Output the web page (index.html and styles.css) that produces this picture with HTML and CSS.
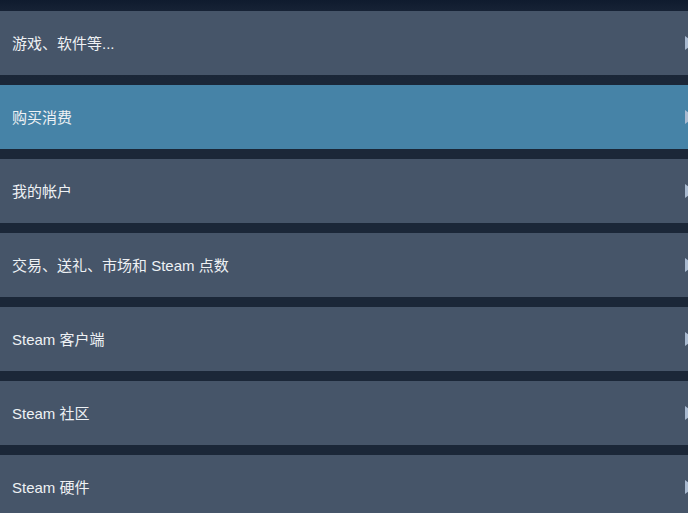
FILE: index.html
```html
<!doctype html>
<html>
    <head>
        <link rel="stylesheet" href="styles.css">
    </head>

    <body>
    <ul class="help-topics">
        <li>
            <span class="topic-label">游戏、软件等...</span>
            <span class="topic-arrow"></span>
        </li>
        <li class="active">
            <span class="topic-label">购买消费</span>
            <span class="topic-arrow"></span>
        </li>
        <li>
            <span class="topic-label">我的帐户</span>
            <span class="topic-arrow"></span>
        </li>
        <li>
            <span class="topic-label">交易、送礼、市场和 Steam 点数</span>
            <span class="topic-arrow"></span>
        </li>
        <li>
            <span class="topic-label">Steam 客户端</span>
            <span class="topic-arrow"></span>
        </li>
        <li>
            <span class="topic-label">Steam 社区</span>
            <span class="topic-arrow"></span>
        </li>
        <li>
            <span class="topic-label">Steam 硬件</span>
            <span class="topic-arrow"></span>
        </li>
    </ul>
    </body>
</html>
```

FILE: styles.css
```css
body {
    margin: 0;
    min-height: 100vh;
    overflow: hidden;
    font-family: "Liberation Sans", "Noto Sans CJK SC", sans-serif;
    background: linear-gradient(to bottom, #0f1b2e 0px, #172336 12px, #1b2738 80px, #1b2738 100%);
}

.help-topics {
    margin: 0;
    padding: 11px 0 0 0;
    list-style-type: none;
    display: flex;
    flex-direction: column;
    gap: 10px;
}

.help-topics li {
    height: 64px;
    display: flex;
    align-items: center;
    padding-left: 12px;
    background-color: #465569;
    color: #eef1f4;
    font-size: 15px;
    cursor: pointer;
}

.help-topics li.active {
    background-color: #4683a7;
}

.topic-label {
    white-space: nowrap;
    padding-bottom: 1px;
}

.topic-arrow {
    margin-left: auto;
    margin-right: -6px;
    width: 0;
    height: 0;
    border-top: 7px solid transparent;
    border-bottom: 7px solid transparent;
    border-left: 9px solid #a9bad0;
}
```
